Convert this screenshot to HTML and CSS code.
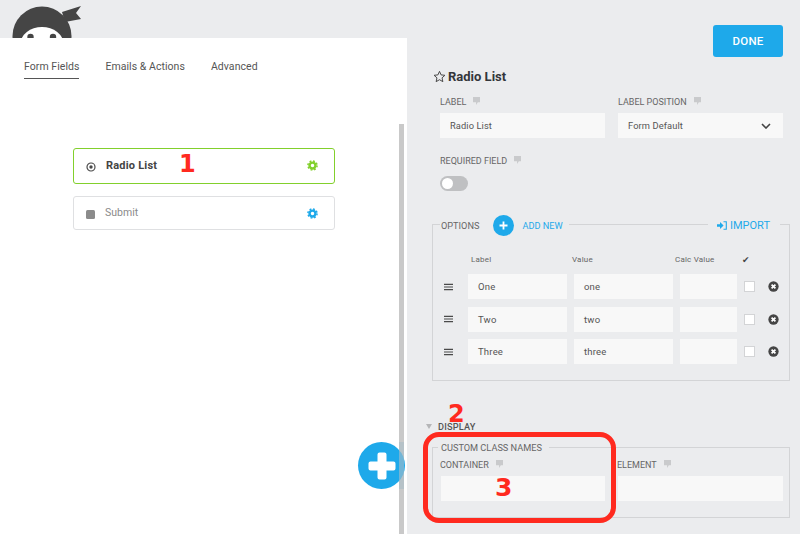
FILE: index.html
```html
<!DOCTYPE html>
<html lang="en">
<head>
    <meta charset="UTF-8">
    <meta name="viewport" content="width=device-width, initial-scale=1.0">
    <title>Form Builder</title>
    <link rel="stylesheet" href="styles.css">
</head>
<body>
    <svg class="defs" width="0" height="0">
        <symbol id="gear" viewBox="0 0 12 12">
            <circle cx="6" cy="6" r="3.2" fill="none" stroke="currentColor" stroke-width="2.6"/>
            <circle cx="6" cy="6" r="5" fill="none" stroke="currentColor" stroke-width="1.6" stroke-dasharray="2 1.93"/>
        </symbol>
        <symbol id="tip" viewBox="0 0 8 9">
            <path d="M0 0H8V6H5.5L3.5 9V6H0Z" fill="#c9cacc"/>
        </symbol>
        <symbol id="bars" viewBox="0 0 10 8">
            <path d="M0 1H10M0 4H10M0 7H10" stroke="#4a4a4a" stroke-width="1.3"/>
        </symbol>
        <symbol id="close" viewBox="0 0 12 12">
            <circle cx="6" cy="6" r="5.6" fill="#454545"/>
            <path d="M3.9 3.9L8.1 8.1M8.1 3.9L3.9 8.1" stroke="#fff" stroke-width="1.9"/>
        </symbol>
    </svg>

    <div class="builder">
        <div class="left">
            <div class="logo-bar">
                <svg class="logo" width="90" height="38" viewBox="0 0 90 38">
                    <circle cx="42" cy="36" r="29.5" fill="#454545"/>
                    <path d="M62 12L81 6L76 13L81 19L65 22Z" fill="#454545"/>
                    <ellipse cx="42" cy="44" rx="21.5" ry="17" fill="#fff"/>
                    <circle cx="30.5" cy="37" r="3.2" fill="#454545"/>
                    <circle cx="53" cy="37" r="3.2" fill="#454545"/>
                </svg>
            </div>
            <div class="canvas">
                <nav class="tabs">
                    <a class="tab active">Form Fields</a>
                    <a class="tab">Emails &amp; Actions</a>
                    <a class="tab">Advanced</a>
                </nav>
                <div class="field-list">
                    <div class="field-card selected">
                        <svg class="field-icon" width="10" height="10" viewBox="0 0 10 10">
                            <circle cx="5" cy="5" r="4" fill="none" stroke="#4a4a4a" stroke-width="1.2"/>
                            <circle cx="5" cy="5" r="1.7" fill="#4a4a4a"/>
                        </svg>
                        <span class="field-name">Radio List</span>
                        <svg class="gear green" width="11" height="11"><use href="#gear"/></svg>
                    </div>
                    <div class="field-card">
                        <span class="stop-icon"></span>
                        <span class="field-name muted">Submit</span>
                        <svg class="gear blue" width="11" height="11"><use href="#gear"/></svg>
                    </div>
                </div>
                <div class="scrollbar"></div>
            </div>
        </div>

        <div class="drawer">
            <div class="drawer-top">
                <button class="done-btn">DONE</button>
            </div>
            <h2 class="drawer-title">
                <svg width="13" height="13" viewBox="0 0 24 24">
                    <path d="M12 2.5L14.9 9L22 9.8L16.7 14.5L18.2 21.5L12 17.9L5.8 21.5L7.3 14.5L2 9.8L9.1 9Z" fill="none" stroke="#444" stroke-width="1.8"/>
                </svg>
                Radio List
            </h2>

            <div class="settings">
                <div class="two-col">
                    <div>
                        <div class="label">LABEL <svg class="tip" width="7" height="8"><use href="#tip"/></svg></div>
                        <div class="input">Radio List</div>
                    </div>
                    <div>
                        <div class="label">LABEL POSITION <svg class="tip" width="7" height="8"><use href="#tip"/></svg></div>
                        <div class="input select">
                            Form Default
                            <svg width="10" height="6" viewBox="0 0 10 6"><path d="M1 1L5 5L9 1" fill="none" stroke="#444" stroke-width="1.6"/></svg>
                        </div>
                    </div>
                </div>
                <div class="label required">REQUIRED FIELD <svg class="tip" width="7" height="8"><use href="#tip"/></svg></div>
                <div class="toggle"><span class="knob"></span></div>
            </div>

            <div class="options">
                <div class="options-legend">
                    <div class="legend-left">
                        <span class="legend-text">OPTIONS</span>
                        <span class="add-btn">
                            <svg width="9" height="9" viewBox="0 0 9 9"><path d="M4.5 0.5V8.5M0.5 4.5H8.5" stroke="#fff" stroke-width="1.8"/></svg>
                        </span>
                        <span class="add-text">ADD NEW</span>
                    </div>
                    <div class="legend-right">
                        <svg width="10" height="9" viewBox="0 0 10 9"><path d="M0 3.2H3V1L6.6 4.5L3 8V5.8H0Z" fill="#1ea9ea"/><path d="M6.5 0.7H9.3V8.3H6.5" fill="none" stroke="#1ea9ea" stroke-width="1.1"/></svg>
                        IMPORT
                    </div>
                </div>
                <div class="option-grid">
                    <span></span>
                    <span class="col-head">Label</span>
                    <span class="col-head value-head">Value</span>
                    <span class="col-head calc-head">Calc Value</span>
                    <span class="col-head check">&#10004;</span>
                    <span></span>

                    <svg width="9" height="8"><use href="#bars"/></svg>
                    <div class="input">One</div>
                    <div class="input">one</div>
                    <div class="input"></div>
                    <span class="checkbox"></span>
                    <svg class="close" width="11" height="11"><use href="#close"/></svg>

                    <svg width="9" height="8"><use href="#bars"/></svg>
                    <div class="input">Two</div>
                    <div class="input">two</div>
                    <div class="input"></div>
                    <span class="checkbox"></span>
                    <svg class="close" width="11" height="11"><use href="#close"/></svg>

                    <svg width="9" height="8"><use href="#bars"/></svg>
                    <div class="input">Three</div>
                    <div class="input">three</div>
                    <div class="input"></div>
                    <span class="checkbox"></span>
                    <svg class="close" width="11" height="11"><use href="#close"/></svg>
                </div>
            </div>

            <div class="section-head">
                <span class="triangle"></span>
                DISPLAY
            </div>
            <div class="class-names">
                <span class="class-legend">CUSTOM CLASS NAMES</span>
                <div class="two-col class-cols">
                    <div>
                        <div class="label">CONTAINER <svg class="tip" width="7" height="8"><use href="#tip"/></svg></div>
                        <div class="input"></div>
                    </div>
                    <div>
                        <div class="label">ELEMENT <svg class="tip" width="7" height="8"><use href="#tip"/></svg></div>
                        <div class="input"></div>
                    </div>
                </div>
            </div>
        </div>
    </div>

    <div class="add-field">
        <svg width="28" height="28" viewBox="0 0 28 28"><path d="M11.5 0.5H16.5Q18.5 0.5 18.5 2.5V9.5H25.5Q27.5 9.5 27.5 11.5V16.5Q27.5 18.5 25.5 18.5H18.5V25.5Q18.5 27.5 16.5 27.5H11.5Q9.5 27.5 9.5 25.5V18.5H2.5Q0.5 18.5 0.5 16.5V11.5Q0.5 9.5 2.5 9.5H9.5V2.5Q9.5 0.5 11.5 0.5Z" fill="#fff"/></svg>
    </div>
    <div class="scrollbar-over"></div>

    <span class="note note-1">1</span>
    <span class="note note-2">2</span>
    <span class="note note-3">3</span>
    <div class="note-box"></div>
</body>
</html>
```

FILE: styles.css
```css
* {
    margin: 0;
    padding: 0;
    box-sizing: border-box;
}

body {
    position: relative;
    width: 800px;
    height: 534px;
    overflow: hidden;
    font-family: Roboto, 'Liberation Sans', sans-serif;
    font-size: 10.5px;
    color: #555;
    background: #ebecee;
}

.defs {
    position: absolute;
}

.builder {
    display: flex;
    height: 100%;
}

/* left side */
.left {
    width: 407px;
    display: flex;
    flex-direction: column;
}

.logo-bar {
    height: 38px;
    overflow: hidden;
}

.logo {
    display: block;
}

.canvas {
    flex: 1;
    position: relative;
    background: #fff;
}

.tabs {
    display: flex;
    gap: 26px;
    padding: 22px 0 0 24px;
}

.tab {
    height: 18.5px;
    line-height: 13px;
    font-size: 10.5px;
    letter-spacing: 0.05px;
    color: #555;
}

.tab.active {
    border-bottom: 1.5px solid #555;
}

.field-list {
    display: flex;
    flex-direction: column;
    gap: 12.5px;
    width: 261.5px;
    margin: 69.5px 0 0 73px;
}

.field-card {
    display: flex;
    align-items: center;
    height: 34px;
    padding: 0 16px 0 12px;
    border: 1px solid #dfe0e2;
    border-radius: 3px;
}

.field-card.selected {
    height: 35.5px;
    border: 1.5px solid #82d02c;
}

.field-icon {
    margin-top: 3px;
}

.stop-icon {
    width: 9px;
    height: 9px;
    margin: 2px 1px 0 0;
    border-radius: 1.5px;
    background: #8b8b8b;
}

.field-name {
    margin: -1px 0 0 10px;
    font-size: 11px;
    font-weight: 700;
    letter-spacing: 0.2px;
    color: #444;
    flex: 1;
}

.field-name.muted {
    margin-left: 9px;
    font-size: 10.5px;
    font-weight: 400;
    letter-spacing: 0;
    color: #8a8a8a;
}

.gear.green {
    color: #82d02c;
}

.gear.blue {
    color: #1ea9ea;
}

.scrollbar {
    position: absolute;
    left: 399px;
    top: 86px;
    bottom: 0;
    width: 5px;
    background: #c9c9c9;
}

/* right side */
.drawer {
    flex: 1;
    padding: 25px 17px 0 33px;
}

.drawer-top {
    display: flex;
    justify-content: flex-end;
}

.done-btn {
    width: 70px;
    height: 32px;
    border: none;
    border-radius: 3px;
    background: #1ea9ea;
    color: #fff;
    font-family: inherit;
    font-size: 11.5px;
    font-weight: 500;
    letter-spacing: 0.2px;
}

.drawer-title {
    display: flex;
    align-items: center;
    gap: 2px;
    height: 16px;
    margin: 11px 0 0 -7px;
    font-size: 13px;
    font-weight: 700;
    color: #33363a;
}

.settings {
    margin-top: 12px;
}

.two-col {
    display: grid;
    grid-template-columns: 165px 165px;
    gap: 13px;
}

.label {
    display: flex;
    align-items: center;
    gap: 7px;
    height: 12px;
    margin-bottom: 5px;
    font-size: 9px;
    color: #666;
}

.tip {
    margin-top: -3px;
}

.input {
    display: flex;
    align-items: center;
    height: 25px;
    padding-left: 10px;
    background: #f8f8f8;
    font-size: 9.3px;
    letter-spacing: 0.1px;
    color: #555;
}

.input.select {
    justify-content: space-between;
    padding-right: 12px;
}

.required {
    margin: 17px 0 9px;
}

.toggle {
    display: flex;
    align-items: center;
    width: 28px;
    height: 15px;
    padding-left: 2px;
    border-radius: 8px;
    background: #bfc0c2;
}

.knob {
    width: 11px;
    height: 11px;
    border-radius: 50%;
    background: #fff;
}

.options {
    height: 157px;
    margin: 33px -7px 0 -8px;
    border: 1px solid #d3d4d6;
}

.options-legend {
    display: flex;
    justify-content: space-between;
    height: 22px;
    margin: -11px 9px 0 7px;
}

.legend-left,
.legend-right {
    display: flex;
    align-items: center;
    background: #ebecee;
}

.legend-left {
    padding: 0 6px 0 1px;
}

.legend-text {
    font-size: 9.2px;
    color: #666;
}

.add-btn {
    display: flex;
    align-items: center;
    justify-content: center;
    width: 21px;
    height: 21px;
    margin: 0 8px 0 14px;
    border-radius: 50%;
    background: #1ea9ea;
}

.add-text {
    font-size: 9.2px;
    color: #1ea9ea;
}

.legend-right {
    gap: 3px;
    padding: 0 10px 0 9px;
    font-size: 11px;
    color: #1ea9ea;
}

.option-grid {
    display: grid;
    grid-template-columns: 17px 99px 99px 57px 10px 18px;
    grid-template-rows: 14px;
    grid-auto-rows: 25px;
    column-gap: 7px;
    row-gap: 7.5px;
    align-items: center;
    margin: 16.5px 0 0 11px;
}

.option-grid .input {
    font-size: 9.5px;
    letter-spacing: 0.2px;
}

.col-head {
    margin-left: 3px;
    font-size: 8px;
    letter-spacing: 0.2px;
    color: #666;
    white-space: nowrap;
}

.value-head {
    margin-left: -2px;
}

.calc-head {
    margin-left: -5px;
}

.col-head.check {
    margin-left: -2px;
    font-family: 'DejaVu Sans', sans-serif;
    font-size: 9px;
    color: #444;
}

.checkbox {
    width: 11px;
    height: 11px;
    background: #fff;
    border: 1px solid #d3d4d6;
}

.close {
    justify-self: end;
}

.section-head {
    display: flex;
    align-items: center;
    gap: 6px;
    height: 12px;
    margin: 39px 0 0 -14px;
    font-size: 9.2px;
    font-weight: 500;
    letter-spacing: 0.2px;
    color: #555;
}

.triangle {
    width: 0;
    height: 0;
    border-left: 3.5px solid transparent;
    border-right: 3.5px solid transparent;
    border-top: 5px solid #b5b6b8;
}

.class-names {
    height: 71px;
    margin: 15px -7px 0 -8px;
    border: 1px solid #d3d4d6;
}

.class-legend {
    display: block;
    width: max-content;
    height: 12px;
    margin: -6px 0 0 5px;
    padding: 0 7px 0 3px;
    background: #ebecee;
    font-size: 9.2px;
    color: #666;
}

.class-cols {
    margin: 5px 0 0 8px;
    grid-template-columns: 164px 165px;
    gap: 13px;
}

.class-cols .label {
    margin-left: -1px;
}

/* things on top */
.add-field {
    position: absolute;
    left: 358px;
    top: 442px;
    width: 47px;
    height: 47px;
    display: flex;
    align-items: center;
    justify-content: center;
    border-radius: 50%;
    background: #1ea9ea;
}

.scrollbar-over {
    position: absolute;
    left: 399px;
    top: 442px;
    width: 5px;
    height: 47px;
    background: rgba(170, 190, 200, 0.6);
}

.note {
    position: absolute;
    font-family: 'DejaVu Sans', sans-serif;
    font-size: 24px;
    font-weight: 700;
    line-height: 24px;
    color: #ff2a1f;
}

.note-1 {
    left: 179px;
    top: 152px;
}

.note-2 {
    left: 448px;
    top: 402px;
}

.note-3 {
    left: 495px;
    top: 476px;
    font-size: 25px;
}

.note-box {
    position: absolute;
    left: 423px;
    top: 432px;
    width: 193px;
    height: 91px;
    border: 5px solid #ff2a1f;
    border-radius: 16px;
}
```
